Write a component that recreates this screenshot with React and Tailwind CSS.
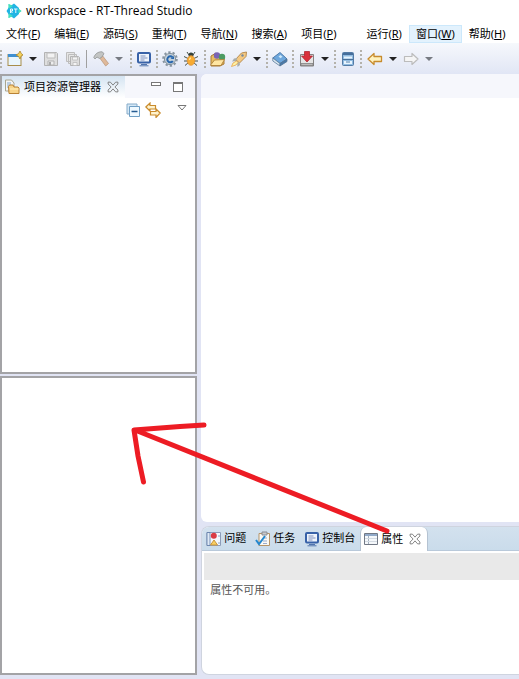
import React from "react";

const Svg = ({ children, className = "h-4 w-4" }) => (
  <svg viewBox="0 0 16 16" className={className + " shrink-0"} fill="none" aria-hidden="true">
    {children}
  </svg>
);

const Logo = () => (
  <Svg className="h-4 w-4">
    <path d="M2.500 1L8 3.500 15.500 8 8 12.500 2.500 15z" fill="#45e0bd" />
    <path d="M8 .5l5 4.500v6l-5 4.500L3 12 .5 8 3 4z" fill="#22b4e4" />
    <path d="M2.500 1L7 3 3 5.500zM2.500 15L7 13l-4-2.500zM12.500 5.500L15.500 8l-3 2.500z" fill="#45e0bd" />
    <path d="M4.500 10V6h2v2h-2l2 2M8 6h3.500M9.800 6v4" stroke="#e9fcff" />
  </Svg>
);

const NewIcon = () => (
  <Svg>
    <rect x="1" y="3.500" width="13" height="11" fill="#e9f5fc" stroke="#a88d4a" />
    <path d="M1 3h11v3H1z" fill="#3f8fd0" />
    <path d="M13 0l1.200 2.400L16 4l-2 1.200L13 8l-1.400-2.600L9 4l2.600-1.400z" fill="#f5d35c" stroke="#ab842c" strokeWidth=".8" />
  </Svg>
);

const SaveIcon = () => (
  <Svg>
    <path d="M1.500 1.500h12l1 1v12h-13z" fill="#dedede" stroke="#b3b3b3" />
    <path d="M4 2h8v5H4z" fill="#f2f2f2" stroke="#bcbcbc" />
    <path d="M5 10h6v4H5z" fill="#ededed" stroke="#b3b3b3" />
    <path d="M6 11h2v3H6z" fill="#aaa" />
  </Svg>
);

const SaveAllIcon = () => (
  <Svg>
    <path d="M1.500 1.500h8v9h-8zM3.500 3.500h8v9h-8z" fill="#e6e6e6" stroke="#bdbdbd" />
    <path d="M5.500 5.500h8l1 1v8h-9z" fill="#dedede" stroke="#b3b3b3" />
    <path d="M7.500 6h5v3h-5zM8 11.500h4v3H8z" fill="#f4f4f4" stroke="#bbb" strokeWidth=".8" />
  </Svg>
);

const HammerIcon = () => (
  <Svg>
    <path d="M6 6l2.500-2.500 7 9-2.800 2.500z" fill="#dfb99a" stroke="#bd9a80" strokeWidth=".8" />
    <path d="M.8 6.500C2 3 5 .6 9 .8L11 2.500l-2 3.500L6.500 7.500 4 6 2 8z" fill="#c3c5c4" stroke="#929695" strokeWidth=".8" />
  </Svg>
);

const ConsoleIcon = () => (
  <Svg>
    <rect x="2" y="2" width="12" height="9.500" rx="1" fill="#eef4fc" stroke="#3862a8" strokeWidth="2" />
    <path d="M4.500 5h5M4.500 7h7M4.500 9h4" stroke="#8192be" />
    <path d="M5 13.500h6M3.500 14.800h9" stroke="#5275ad" />
  </Svg>
);

const GearIcon = () => (
  <Svg>
    <circle cx="8" cy="8" r="6.800" stroke="#8794a0" strokeWidth="2" strokeDasharray="2.300 2" />
    <circle cx="8" cy="8" r="5.600" fill="#c5d0d9" stroke="#81909b" />
    <path d="M10.500 6.300A3 3 0 1 0 10.800 10" stroke="#2867ae" strokeWidth="2" />
    <path d="M8.500 8h3.500V5" fill="#2867ae" />
  </Svg>
);

const BugIcon = () => (
  <Svg>
    <path d="M4 1l2 3M12 1l-2 3M1 5.500l4 2M15 5.500l-4 2M1 10h14M2 14.500l4-3.500M14 14.500l-4-3.500" stroke="#455047" />
    <circle cx="8" cy="4" r="2.500" fill="#344038" />
    <ellipse cx="8" cy="9.500" rx="3.800" ry="4.800" fill="#f7ab32" stroke="#e09336" strokeWidth=".8" />
    <path d="M6.500 9c0-1 .5-2 1.500-2" stroke="#ffe39b" strokeWidth="1.300" />
  </Svg>
);

const OpenIcon = () => (
  <Svg>
    <path d="M1 5l5-3 2 2 6 1v8l-4 2H1z" fill="#e7bd63" stroke="#a97a34" />
    <circle cx="7" cy="4.500" r="3.200" fill="#7963b4" />
    <circle cx="12" cy="6" r="3.200" fill="#4c9b63" />
    <path d="M1 13.500L4.500 9l10-.5-3.500 6H1z" fill="#ffe6a2" stroke="#ae8038" strokeWidth=".9" />
  </Svg>
);

const RocketIcon = () => (
  <Svg>
    <path d="M4.500 8.500L10.500 2l5-1-.5 4.500-6.500 6.500z" fill="#f5c981" stroke="#b88e54" />
    <path d="M6.500 7L3 7.500l-2 3 4-.5M8.500 11L9 14l-2.500 2L6 11" fill="#a8adab" />
    <path d="M5.500 10L2 12l-1.500 3.500L5 14l2-2.500z" fill="#fff1a3" stroke="#e4a74b" strokeWidth=".8" />
    <circle cx="11.500" cy="4.500" r="1.200" fill="#75899e" />
  </Svg>
);

const BookIcon = () => (
  <Svg>
    <path d="M.8 7L8 1.500 15 8l-7 4.500z" fill="#6da7dd" stroke="#4d7baa" />
    <path d="M.8 7v3L8 15v-2.500z" fill="#d9e6ef" stroke="#5b7c9d" strokeWidth=".8" />
    <path d="M8 12.500L15 8v2.500L8 15z" fill="#4779ac" stroke="#55748f" strokeWidth=".8" />
    <path d="M6.500 5.500l2-1.500 2 1.800-2 1.400z" fill="#cce8fa" />
  </Svg>
);

const DownloadIcon = () => (
  <Svg>
    <path d="M2 3.500h12.500v11.500h-13V3.500z" fill="#e5e5e5" stroke="#858282" />
    <path d="M2 12.500h12v2H2z" fill="#bdbbbb" stroke="#777" strokeWidth=".7" />
    <path d="M5.500.5h5V5h3L8 11 2.500 5h3z" fill="#d9303b" stroke="#ae2732" strokeWidth=".8" />
  </Svg>
);

const CabinetIcon = () => (
  <Svg>
    <rect x="2.500" y="1.500" width="11" height="13" rx="1" fill="#91bce1" stroke="#537ba5" />
    <path d="M3 2h10v2H3z" fill="#466e9b" />
    <path d="M4 5.500h8v2H4zM4 10h8v3H4z" fill="#e7f4fd" />
    <path d="M3 8.500h10" stroke="#496f98" />
    <path d="M6 11h4" stroke="#5580aa" />
  </Svg>
);

const BackIcon = () => (
  <Svg>
    <path d="M1 8l6-5.500v3h7.500v5H7v3z" fill="#fff2bd" stroke="#c78b2d" strokeWidth="1.300" strokeLinejoin="round" />
  </Svg>
);

const ForwardIcon = () => (
  <Svg>
    <path d="M15 8L9 2.500v3H1.500v5H9v3z" fill="#f5f5f5" stroke="#bcbcbc" strokeWidth="1.200" strokeLinejoin="round" />
  </Svg>
);

const ExplorerIcon = () => (
  <Svg>
    <path d="M1.500 1h6L10 4v8H1.500z" fill="#f3f4f5" stroke="#aaa58e" />
    <path d="M3 4h4M3 6h4M3 8h3" stroke="#82a6ca" />
    <path d="M4.500 7.500l1-1.500H9l1 2h4l1 1v5.500H5z" fill="#f8d489" stroke="#b88134" />
    <path d="M6 10h8.500" stroke="#fff0bd" />
  </Svg>
);

const CloseIcon = () => (
  <Svg className="h-3 w-3">
    <path d="M1.500 1.500h3L8 5.500l3.500-4h3v2.500L10.500 8l4 4v2.500h-3L8 10.500l-3.500 4h-3V12l4-4-4-4z" stroke="#777" strokeWidth="1.200" />
  </Svg>
);

const CollapseIcon = () => (
  <Svg>
    <path d="M2 12V2h10v3H5v7z" fill="#d5e8f6" stroke="#86abc9" />
    <path d="M4.500 4.500h10v10h-10z" fill="#eff9ff" stroke="#6f9fc5" />
    <path d="M6.500 9.500h6" stroke="#255b91" strokeWidth="1.500" />
  </Svg>
);

const LinkIcon = () => (
  <Svg>
    <path d="M.8 5L5 1v2.500h5.500V7H5v2z" fill="#fff3ce" stroke="#c98b2c" strokeWidth="1.200" />
    <path d="M15.200 11L11 7v2.500H5.500V13H11v2.500z" fill="#fff3ce" stroke="#c98b2c" strokeWidth="1.200" />
  </Svg>
);

const ProblemsIcon = () => (
  <Svg>
    <path d="M1 1.500h13.500v13H1z" fill="#f5f8fc" stroke="#8c9cb9" />
    <path d="M1 1.500h3v13H1z" fill="#dfe9f5" stroke="#5c78a6" strokeWidth=".8" />
    <circle cx="7.800" cy="4.800" r="3" fill="#da3b44" />
    <path d="M8 9l3.500 5h-7z" fill="#f8cf62" stroke="#cb953a" />
    <path d="M12 5h2M12 12h2" stroke="#8ca4ca" />
  </Svg>
);

const TasksIcon = () => (
  <Svg>
    <path d="M4 2.500h10.500v12H4z" fill="#faf9f4" stroke="#b49468" />
    <path d="M7 1h5v3H7z" fill="#c9c9cb" stroke="#898d94" />
    <path d="M8 7h4M8 10h4M8 12.500h4" stroke="#98add0" />
    <path d="M1 9l3 4 6-8" stroke="#2487ce" strokeWidth="2" />
  </Svg>
);

const PropertiesIcon = () => (
  <Svg>
    <path d="M1.500 2.500h13v11h-13z" fill="#f5f8fb" stroke="#717885" />
    <path d="M2 3h12v2H2z" fill="#91a9c8" />
    <path d="M5.500 5v8" stroke="#a4b0bf" />
    <path d="M2 7.500h12M2 10.500h12" stroke="#d3dae2" />
  </Svg>
);

const Tool = ({ label, wide, children }) => (
  <button aria-label={label} className={(wide ? "w-[18px]" : "w-4") + " flex h-5 shrink-0 items-center justify-center"}>
    {children}
  </button>
);

const Caret = ({ label, muted }) => (
  <button aria-label={label} className="flex h-5 w-2.5 shrink-0 items-center justify-center">
    <svg viewBox="0 0 8 4" className={(muted ? "text-[#777b82]" : "text-[#222]") + " h-1 w-2"} fill="currentColor" aria-hidden="true">
      <path d="M0 0h8L4 4z" />
    </svg>
  </button>
);

const Grip = () => <span className="h-[18px] w-0 shrink-0 border-l-2 border-dotted border-[#b4b2ab]" />;

const menus = [
  ["文件", "F"],
  ["编辑", "E"],
  ["源码", "S"],
  ["重构", "T"],
  ["导航", "N"],
  ["搜索", "A"],
  ["项目", "P"],
  ["运行", "R"],
  ["窗口", "W"],
  ["帮助", "H"],
];

const tabs = [
  ["问题", ProblemsIcon],
  ["任务", TasksIcon],
  ["控制台", ConsoleIcon],
];

function Toolbar() {
  return (
    <div role="toolbar" className="flex h-[31px] shrink-0 items-center gap-1 overflow-hidden bg-linear-to-b from-[#f6f8fc] to-[#e1e6f5]">
      <Grip />
      <Tool label="新建" wide><NewIcon /></Tool>
      <Caret label="新建选项" />
      <Tool label="保存" wide><SaveIcon /></Tool>
      <Tool label="全部保存" wide><SaveAllIcon /></Tool>
      <span className="h-[18px] w-0.5 shrink-0 border-l border-[#a0a0a0]" />
      <Tool label="构建" wide><HammerIcon /></Tool>
      <Caret label="构建选项" muted />
      <div className="flex items-center gap-1 pl-0.5">
        <Grip />
        <Tool label="控制台"><ConsoleIcon /></Tool>
        <Grip />
        <Tool label="设置"><GearIcon /></Tool>
        <Tool label="调试" wide><BugIcon /></Tool>
        <Grip />
      </div>
      <Tool label="打开元素"><OpenIcon /></Tool>
      <Tool label="启动" wide><RocketIcon /></Tool>
      <Caret label="启动选项" />
      <Grip />
      <Tool label="文档"><BookIcon /></Tool>
      <Grip />
      <Tool label="下载" wide><DownloadIcon /></Tool>
      <Caret label="下载选项" />
      <Grip />
      <Tool label="终端"><CabinetIcon /></Tool>
      <Grip />
      <Tool label="后退" wide><BackIcon /></Tool>
      <Caret label="后退历史" />
      <Tool label="前进" wide><ForwardIcon /></Tool>
      <Caret label="前进历史" muted />
    </div>
  );
}

export default function App() {
  return (
    <div className="relative flex h-screen flex-col overflow-hidden bg-[#e1e4f4] font-['Noto_Sans','Noto_Sans_CJK_SC',sans-serif] text-[11px] text-black">
      <header className="shrink-0 bg-white">
        <div className="flex h-[25px] items-center gap-1 pb-1 pl-1.5">
          <Logo />
          <h1 className="font-['Open_Sans','Noto_Sans',sans-serif] text-xs whitespace-nowrap">workspace - RT-Thread Studio</h1>
        </div>
        <nav className="-ml-px flex h-[18px]">
          {menus.map(([name, key]) => (
            <button
              key={key}
              className={
                (key === "W" ? "border-[#cce8fb] bg-[#e3f2fd]" : "border-transparent") +
                (key === "R" ? " ml-4" : "") +
                " flex shrink-0 items-center border px-1.5 whitespace-nowrap"
              }
            >
              {name}(<u className="underline-offset-1">{key}</u>)
            </button>
          ))}
        </nav>
      </header>
      <Toolbar />
      <main className="flex min-h-0 flex-1 gap-1 pb-1">
        <div className="flex w-[38%] shrink-0 flex-col gap-0.5">
          <section className="flex flex-1 flex-col border-2 border-[#a3a3a6] bg-white">
            <div className="flex h-[22px] items-center bg-[#f6f7fc]">
              <div className="flex h-full items-center gap-1 bg-linear-to-b from-[#d5e4f2] to-white pr-1.5 pl-0.5">
                <ExplorerIcon />
                <h2 className="whitespace-nowrap">项目资源管理器</h2>
                <button aria-label="关闭" className="ml-0.5"><CloseIcon /></button>
              </div>
              <button aria-label="最小化" className="mb-1.5 ml-auto h-1 w-2.5 border border-[#777] bg-white" />
              <button aria-label="最大化" className="mr-3 ml-3 h-2.5 w-2.5 border border-t-2 border-[#777] bg-white" />
            </div>
            <div className="flex h-6 items-center justify-end gap-1 pr-2">
              <button aria-label="全部折叠"><CollapseIcon /></button>
              <button aria-label="与编辑器链接"><LinkIcon /></button>
              <button aria-label="视图菜单" className="mb-1 ml-3">
                <svg viewBox="0 0 10 6" className="h-1.5 w-2.5" fill="white" stroke="#777" aria-hidden="true">
                  <path d="M1 .5h8L5 5z" />
                </svg>
              </button>
            </div>
          </section>
          <section className="flex-1 border-2 border-[#a3a3a6] bg-white" />
        </div>
        <div className="flex min-w-0 flex-1 flex-col gap-1">
          <section className="min-h-0 flex-1 overflow-hidden rounded-l-md bg-white">
            <div className="h-6 bg-[#f6f7fc]" />
          </section>
          <section className="flex h-[149px] shrink-0 flex-col overflow-hidden rounded-l-lg border border-r-0 border-[#cfd4df] bg-white">
            <div role="tablist" className="flex h-6 shrink-0 items-stretch border-b border-[#b9c9da] bg-linear-to-b from-[#d3e1ee] to-[#cadceb]">
              {tabs.map(([name, Icon]) => (
                <button key={name} role="tab" aria-selected="false" className="flex shrink-0 items-center gap-0.5 pr-[5px] pl-1 whitespace-nowrap">
                  <Icon />
                  {name}
                </button>
              ))}
              <div className="-mb-px flex shrink-0 items-center gap-1.5 rounded-t-md border-x border-[#b5c3d2] bg-white pr-1.5 pl-0.5">
                <button role="tab" aria-selected="true" className="flex items-center gap-0.5 whitespace-nowrap">
                  <PropertiesIcon />
                  属性
                </button>
                <button aria-label="关闭属性"><CloseIcon /></button>
              </div>
            </div>
            <div className="mt-0.5 ml-0.5 h-[27px] shrink-0 bg-[#e9e9e9]" />
            <p className="px-2 py-0.5 text-[#555]">属性不可用。</p>
          </section>
        </div>
      </main>
      <svg viewBox="0 0 519 679" className="pointer-events-none absolute inset-0 h-full w-full" fill="none" stroke="#ed1c24" strokeWidth="5" strokeLinecap="round" strokeLinejoin="round" aria-hidden="true">
        <path d="M387 531L135 430M204 425L180 426.500L134 430L138 456L143.500 482" />
      </svg>
    </div>
  );
}
